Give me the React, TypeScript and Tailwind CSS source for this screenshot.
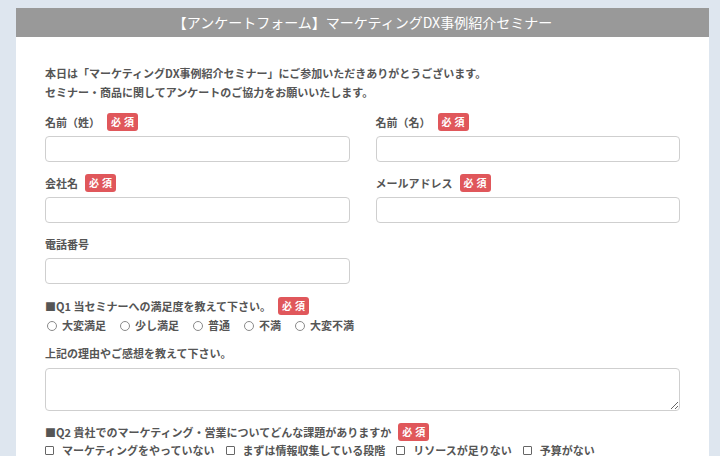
import React from "react";

function Badge() {
  return (
    <span className="ml-[7px] inline-flex h-[18px] w-[31px] items-center justify-center rounded-[3px] bg-[#e0575b] text-[10px] font-bold leading-none tracking-[3px] text-white">
      <span className="pl-[3px]">必須</span>
    </span>
  );
}

function Field({ label, required }: { label: string; required?: boolean }) {
  return (
    <div className="flex flex-col">
      <div className="flex h-[18px] items-center text-[11px] font-bold text-[#555]">
        <span>{label}</span>
        {required && <Badge />}
      </div>
      <input
        type="text"
        className="mt-[5px] h-[26px] w-full rounded-[4px] border border-[#cfcfcf] bg-white outline-none"
      />
    </div>
  );
}

const radios = ["大変満足", "少し満足", "普通", "不満", "大変不満"];
const checks = ["マーケティングをやっていない", "まずは情報収集している段階", "リソースが足りない", "予算がない"];

export default function App() {
  return (
    <div className="min-h-[456px] bg-[#dee6ef] pl-[16px] pr-[11px] pt-[8px] font-['Noto_Sans_CJK_JP',sans-serif]">
      <div className="min-h-[448px] bg-white">
        <div className="flex h-[29px] items-center justify-center bg-[#999999] text-[14px] text-white">
          【アンケートフォーム】マーケティングDX事例紹介セミナー
        </div>
        <div className="px-[29px] pt-[27px]">
          <p className="text-[11px] font-bold leading-[19px] text-[#555]">
            本日は「マーケティングDX事例紹介セミナー」にご参加いただきありがとうございます。
            <br />
            セミナー・商品に関してアンケートのご協力をお願いいたします。
          </p>
          <div className="mt-[11px] grid grid-cols-2 gap-x-[26px] gap-y-[12px]">
            <Field label="名前（姓）" required />
            <Field label="名前（名）" required />
            <Field label="会社名" required />
            <Field label="メールアドレス" required />
            <Field label="電話番号" />
          </div>
          <div className="mt-[13px] flex h-[18px] items-center text-[11px] font-bold text-[#555]">
            <span>■Q1 当セミナーへの満足度を教えて下さい。</span>
            <Badge />
          </div>
          <div className="mt-[1px] flex h-[19px] items-center gap-[12px] text-[11px] font-bold text-[#555]">
            {radios.map((r) => (
              <label key={r} className="flex items-center gap-[5px]">
                <span className="ml-[2px] inline-block h-[10px] w-[10px] rounded-full border border-[#8a8a8a] bg-white" />
                <span>{r}</span>
              </label>
            ))}
          </div>
          <div className="mt-[9px] flex h-[18px] items-center text-[11px] font-bold text-[#555]">
            上記の理由やご感想を教えて下さい。
          </div>
          <textarea className="mt-[6px] block h-[43px] w-full rounded-[4px] border border-[#cfcfcf] bg-white outline-none" />
          <div className="mt-[12px] flex h-[18px] items-center text-[11px] font-bold text-[#555]">
            <span>■Q2 貴社でのマーケティング・営業についてどんな課題がありますか</span>
            <Badge />
          </div>
          <div className="flex h-[19px] items-center gap-[11px] text-[11px] font-bold text-[#555]">
            {checks.map((c) => (
              <label key={c} className="flex items-center gap-[8px]">
                <span className="inline-block h-[9px] w-[9px] rounded-[1px] border border-[#666] bg-white" />
                <span>{c}</span>
              </label>
            ))}
          </div>
        </div>
      </div>
    </div>
  );
}
